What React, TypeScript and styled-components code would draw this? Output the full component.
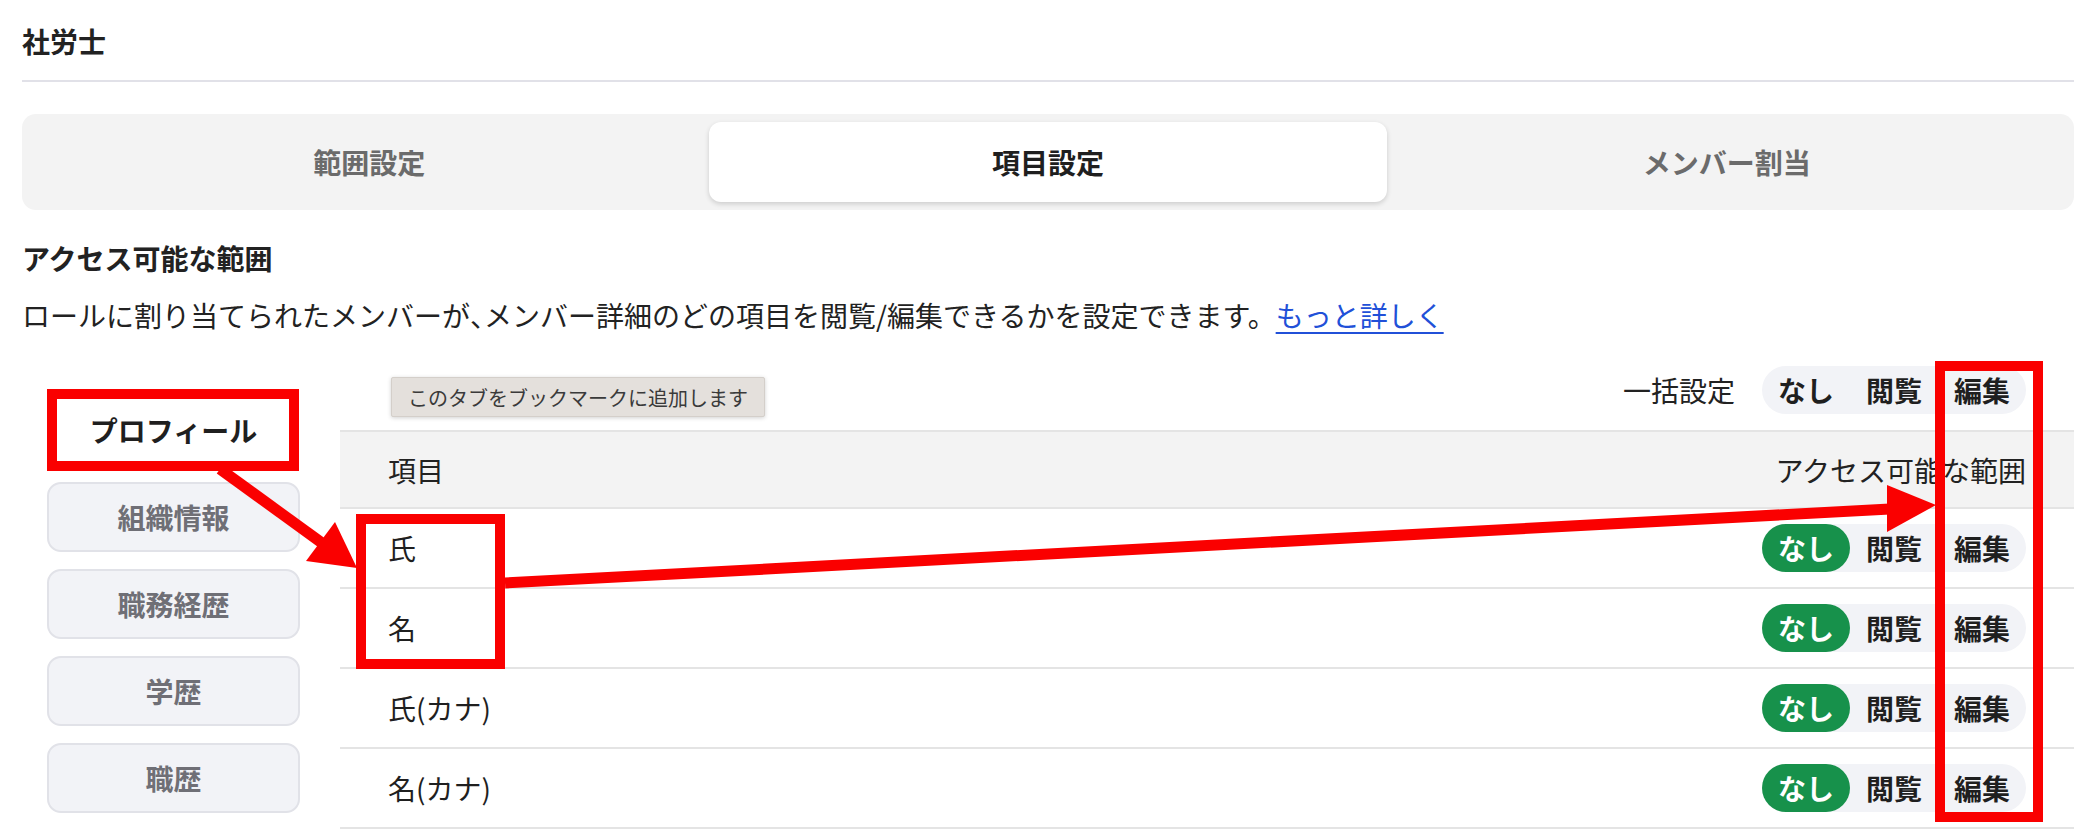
import React from 'react'
import styled, { createGlobalStyle } from 'styled-components'

//-----------------------------------------------------------------------------
// Data
//-----------------------------------------------------------------------------
const tabs = ['範囲設定', '項目設定', 'メンバー割当']
const sections = ['プロフィール', '組織情報', '職務経歴', '学歴', '職歴']
const items = ['氏', '名', '氏(カナ)', '名(カナ)']
const levels = ['なし', '閲覧', '編集']

//-----------------------------------------------------------------------------
// Component
//-----------------------------------------------------------------------------
const AccessPill = ({ active }: { active?: number }) => (
  <Pill>
    {levels.map((level, i) => (
      <Segment key={level} $active={i === active}>
        {level}
      </Segment>
    ))}
  </Pill>
)

const Annotations = () => (
  <Overlay viewBox="0 0 2090 830">
    <rect x="52" y="394" width="242" height="72" fill="none" stroke="#fa0000" strokeWidth="10" />
    <rect x="361" y="519" width="139" height="145" fill="none" stroke="#fa0000" strokeWidth="10" />
    <rect x="1940" y="366" width="98" height="451" fill="none" stroke="#fa0000" strokeWidth="10" />
    <line x1="220" y1="469" x2="322" y2="543" stroke="#fa0000" strokeWidth="11" />
    <polygon points="357,568 306,561 335,522" fill="#fa0000" />
    <line x1="505" y1="583" x2="1890" y2="509" stroke="#fa0000" strokeWidth="11" />
    <polygon points="1936,505 1887,485 1887,532" fill="#fa0000" />
  </Overlay>
)

export const App = () => {
  return (
    <Page>
      <GlobalStyle />
      <Title>社労士</Title>
      <TabBar>
        {tabs.map((tab, i) => (
          <Tab key={tab} $active={i === 1}>
            {tab}
          </Tab>
        ))}
      </TabBar>
      <Heading>アクセス可能な範囲</Heading>
      <Description>
        ロールに割り当てられたメンバーが<Punct>、</Punct>メンバー詳細のどの項目を閲覧/編集できるかを設定できます。
        <Link href="#">もっと詳しく</Link>
      </Description>
      <Body>
        <Nav>
          {sections.map((section, i) => (
            <NavButton key={section} $active={i === 0}>
              {section}
            </NavButton>
          ))}
        </Nav>
        <Panel>
          <Tooltip>このタブをブックマークに追加します</Tooltip>
          <BulkBar>
            <BulkLabel>一括設定</BulkLabel>
            <AccessPill />
          </BulkBar>
          <Table>
            <HeaderRow>
              <span>項目</span>
              <span>アクセス可能な範囲</span>
            </HeaderRow>
            {items.map(item => (
              <Row key={item}>
                <span>{item}</span>
                <AccessPill active={0} />
              </Row>
            ))}
          </Table>
        </Panel>
      </Body>
      <Annotations />
    </Page>
  )
}

//-----------------------------------------------------------------------------
// Styled Components
//-----------------------------------------------------------------------------
const GlobalStyle = createGlobalStyle`
  body {
    margin: 0;
    background: #ffffff;
    color: #222222;
    font-family: "Noto Sans CJK JP", "Noto Sans", sans-serif;
  }
`

const Page = styled.div`
  position: relative;
  width: 2090px;
  height: 830px;
  overflow: hidden;
  box-sizing: border-box;
  padding: 0 16px 0 22px;
`

const Title = styled.div`
  padding: 21px 0 19px;
  font-size: 28px;
  line-height: 40px;
  font-weight: 700;
  border-bottom: 2px solid #e1e1e8;
`

const TabBar = styled.div`
  margin-top: 32px;
  height: 96px;
  box-sizing: border-box;
  padding: 8px;
  display: grid;
  grid-template-columns: repeat(3, 1fr);
  background: #f3f3f3;
  border-radius: 14px;
`

const Tab = styled.div<{ $active?: boolean }>`
  display: flex;
  justify-content: center;
  align-items: center;
  font-size: 28px;
  font-weight: 700;
  border-radius: 12px;
  color: ${p => (p.$active ? '#1f1f1f' : '#6b6b6b')};
  background: ${p => (p.$active ? '#ffffff' : 'transparent')};
  box-shadow: ${p => (p.$active ? '0 2px 5px rgba(0, 0, 0, 0.16)' : 'none')};
`

const Heading = styled.div`
  margin-top: 28px;
  font-size: 28px;
  line-height: 40px;
  font-weight: 700;
`

const Description = styled.div`
  margin-top: 17px;
  font-size: 28px;
  line-height: 40px;
  color: #222222;
`

const Punct = styled.span`
  font-feature-settings: "halt";
`

const Link = styled.a`
  color: #2150d8;
  text-decoration: underline;
  text-decoration-thickness: 2px;
  text-underline-offset: 5px;
`

const Body = styled.div`
  margin-top: 15px;
  padding-left: 25px;
  display: flex;
  gap: 40px;
`

const Nav = styled.div`
  width: 253px;
  flex-shrink: 0;
  padding-top: 45px;
  display: flex;
  flex-direction: column;
  gap: 17px;
`

const NavButton = styled.div<{ $active?: boolean }>`
  height: 70px;
  box-sizing: border-box;
  display: flex;
  justify-content: center;
  align-items: center;
  font-size: 28px;
  font-weight: 700;
  border-radius: 14px;
  border: 2px solid ${p => (p.$active ? '#ffffff' : '#e1e2e8')};
  background: ${p => (p.$active ? '#ffffff' : '#f2f3f7')};
  color: ${p => (p.$active ? '#1f1f1f' : '#6f6f76')};
`

const Panel = styled.div`
  position: relative;
  flex: 1;
`

const Tooltip = styled.div`
  position: absolute;
  left: 51px;
  top: 27px;
  height: 40px;
  box-sizing: border-box;
  padding: 0 16px;
  display: flex;
  align-items: center;
  font-size: 20px;
  color: #3a3a3a;
  background: #e4e0dc;
  border: 1px solid #d4cfca;
  border-radius: 2px;
  box-shadow: 0 1px 4px rgba(0, 0, 0, 0.18);
`

const BulkBar = styled.div`
  height: 80px;
  padding-right: 48px;
  display: flex;
  justify-content: flex-end;
  align-items: center;
  gap: 27px;
`

const BulkLabel = styled.span`
  font-size: 28px;
  color: #222222;
`

const Pill = styled.div`
  display: flex;
  height: 48px;
  border-radius: 24px;
  background: #f2f3f7;
`

const Segment = styled.div<{ $active?: boolean }>`
  width: 88px;
  display: flex;
  justify-content: center;
  align-items: center;
  font-size: 28px;
  font-weight: 700;
  border-radius: 24px;
  color: ${p => (p.$active ? '#ffffff' : '#1f1f1f')};
  background: ${p => (p.$active ? '#17914b' : 'transparent')};
`

const Table = styled.div`
  border-top: 2px solid #e4e4e4;
`

const HeaderRow = styled.div`
  height: 75px;
  padding: 0 48px;
  display: flex;
  justify-content: space-between;
  align-items: center;
  font-size: 28px;
  color: #222222;
  background: #f3f3f3;
  border-bottom: 2px solid #e4e4e4;
`

const Row = styled.div`
  height: 78px;
  padding: 0 48px;
  display: flex;
  justify-content: space-between;
  align-items: center;
  font-size: 28px;
  color: #1f1f1f;
  border-bottom: 2px solid #e4e4e4;
`

const Overlay = styled.svg`
  position: absolute;
  top: 0;
  left: 0;
  width: 2090px;
  height: 830px;
  pointer-events: none;
`

export default App
